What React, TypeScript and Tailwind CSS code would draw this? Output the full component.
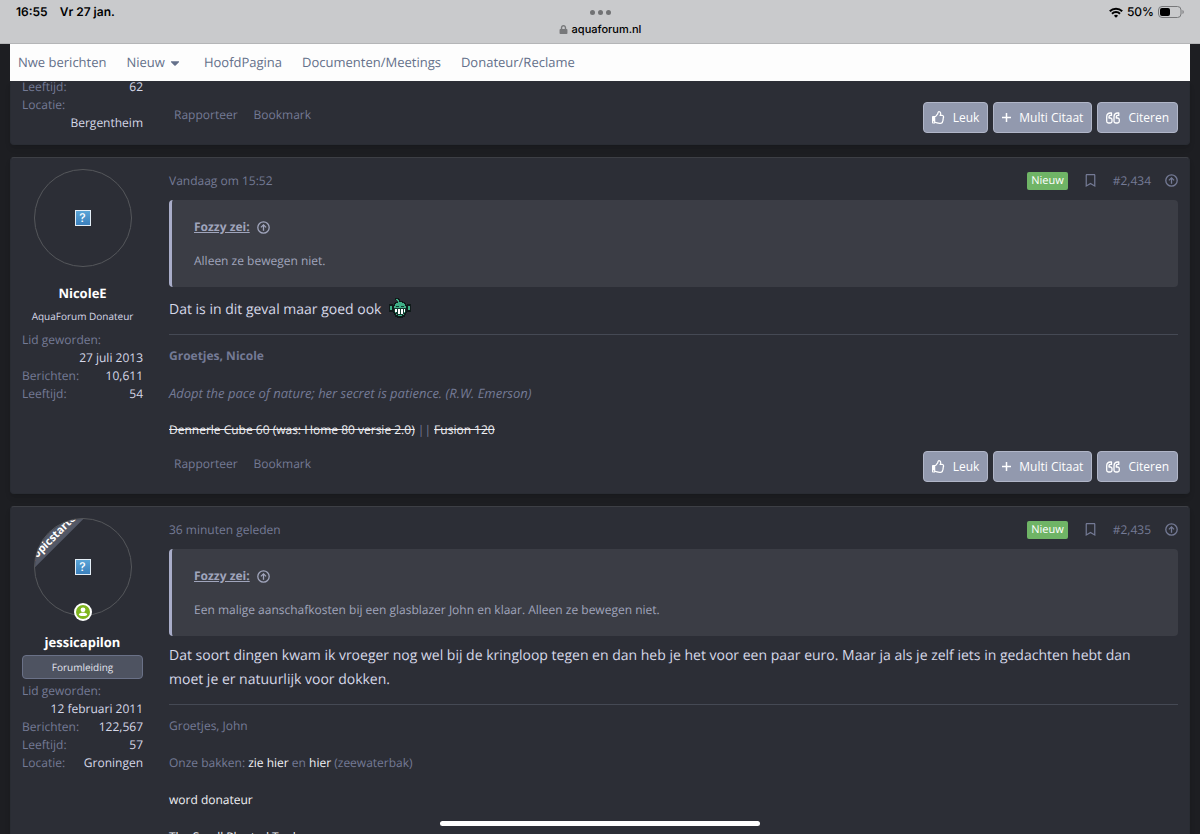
import { FaCaretDown, FaLock, FaRegBookmark, FaRegThumbsUp } from "react-icons/fa";
import type { ReactNode } from "react";

const navLinks = [
  { name: "Nwe berichten" },
  { name: "Nieuw", menu: true },
  { name: "HoofdPagina" },
  { name: "Documenten/Meetings" },
  { name: "Donateur/Reclame" },
];

type Stat = { label: string; value: string; wrap?: boolean };

const WifiIcon = () => (
  <svg width="14" height="11" viewBox="0 0 14 11" fill="none" stroke="#000" strokeWidth="2">
    <path d="M.8 4.200a8.800 8.800 0 0 1 12.400 0" />
    <path d="M3 6.700a5.700 5.700 0 0 1 8 0" />
    <path d="M7 10.800 4.900 8.700a3 3 0 0 1 4.200 0z" fill="#000" stroke="none" />
  </svg>
);

const StatusBar = () => (
  <header className="relative h-11 shrink-0 border-b border-[#b4b5b7] bg-[#c9cacc] font-[Inter,sans-serif] text-black">
    <div className="flex items-center justify-between px-4 pt-1 text-xs leading-4 font-semibold">
      <div className="flex gap-3">
        <span>16:55</span>
        <span>Vr 27 jan.</span>
      </div>
      <div className="flex items-center gap-1">
        <WifiIcon />
        <span className="font-medium">50%</span>
        <svg width="26" height="12" viewBox="0 0 26 12" aria-label="Batterij">
          <rect x="0.5" y="0.5" width="22.500" height="11" rx="3.500" fill="none" stroke="#77787a" />
          <rect x="2" y="2" width="10" height="8" rx="2" />
          <path d="M24.500 4v4c1.600-.6 1.600-3.400 0-4z" fill="#77787a" />
        </svg>
      </div>
    </div>
    <div className="absolute inset-x-0 top-[10px] flex flex-col items-center gap-2">
      <div className="flex gap-[3px]">
        <i className="size-[5px] rounded-full bg-[#717274]" />
        <i className="size-[5px] rounded-full bg-[#717274]" />
        <i className="size-[5px] rounded-full bg-[#717274]" />
      </div>
      <div className="flex items-center gap-1 text-[11px] leading-3 font-medium">
        <FaLock size={9} color="#77787a" />
        <span>aquaforum.nl</span>
      </div>
    </div>
  </header>
);

const Navbar = () => (
  <nav className="relative z-10 mx-[10px] flex h-[37px] shrink-0 items-center gap-5 bg-[#fdfdfd] px-2 text-[13px] text-[#64708a]">
    {navLinks.map((link) => (
      <a key={link.name} href="#" className="flex items-center gap-[3px]">
        {link.name}
        {link.menu && <FaCaretDown size={14} className="mr-[2px]" />}
      </a>
    ))}
  </nav>
);

const Stats = ({ items }: { items: Stat[] }) => (
  <dl className="text-xs leading-[18px]">
    {items.map((item) => (
      <div key={item.label} className={item.wrap ? "" : "flex justify-between"}>
        <dt className="text-[#747a95]">{item.label}</dt>
        <dd className="text-right text-[#d6d8e8]">{item.value}</dd>
      </div>
    ))}
  </dl>
);

const Avatar = ({ starter }: { starter?: boolean }) => (
  <div className="relative mx-auto size-[98px]">
    <div className="relative flex size-full items-center justify-center overflow-hidden rounded-full border border-[#55575b]">
      <span className="flex size-4 items-center justify-center border border-[#e4eef6] bg-linear-to-b from-[#5aa5d8] to-[#3a7fbb] font-[Inter,sans-serif] text-xs leading-none font-medium text-white">
        ?
      </span>
      {starter && (
        <span className="absolute top-[10px] -left-[36px] w-[110px] -rotate-45 bg-[#535866] text-center text-[11px] leading-4 font-bold text-white">
          Topicstarter
        </span>
      )}
    </div>
    {starter && (
      <svg className="absolute -bottom-[5px] left-[40px]" width="18" height="18" viewBox="0 0 18 18" aria-label="Online">
        <circle cx="9" cy="9" r="9" fill="#fff" />
        <circle cx="9" cy="9" r="7" fill="#7fb51e" />
        <circle cx="9" cy="6.800" r="2.400" fill="#fff" />
        <path d="M4.800 11.500c0-2.200 8.400-2.200 8.400 0 0 .8-1 1.500-4.200 1.500s-4.200-.7-4.200-1.500z" fill="#fff" />
      </svg>
    )}
  </div>
);

const QuoteIcon = () => (
  <svg width="14" height="12" viewBox="0 0 14 12" fill="none" stroke="currentColor" strokeWidth="1.300" strokeLinejoin="round">
    <path d="M5.500 1H4.600C2.300 1 .7 2.700.7 5v4.200c0 1 .7 1.800 1.800 1.800h1.700c1 0 1.800-.8 1.800-1.800V7.700C6 6.700 5.200 6 4.200 6H3V5c0-1 .6-1.600 1.600-1.600h.9z" />
    <path d="M12.800 1h-.9C9.600 1 8 2.700 8 5v4.200c0 1 .7 1.800 1.800 1.800h1.700c1 0 1.800-.8 1.800-1.800V7.700c0-1-.8-1.700-1.800-1.700h-1.200V5c0-1 .6-1.600 1.600-1.600h.9z" />
  </svg>
);

const PlusIcon = () => (
  <svg width="9" height="9" viewBox="0 0 9 9" stroke="currentColor" strokeWidth="1.500">
    <path d="M0 4.500h9M4.500 0v9" />
  </svg>
);

const ArrowUpIcon = () => (
  <svg width="13" height="13" viewBox="0 0 13 13" fill="none" stroke="currentColor" strokeWidth="1.300">
    <circle cx="6.500" cy="6.500" r="5.700" />
    <path d="M6.500 9.800V4" />
    <path d="M3.900 6.400 6.500 3.800l2.600 2.600" />
  </svg>
);

const actionStyling =
  "flex h-[31px] items-center gap-2 rounded border border-[#b1b6c8] bg-[#9299ae] px-2 text-xs text-white";

const PostActions = () => (
  <div className="flex items-end justify-between">
    <div className="flex gap-4 pb-[9px] pl-[5px] text-xs leading-[18px] text-[#747a95]">
      <a href="#">Rapporteer</a>
      <a href="#">Bookmark</a>
    </div>
    <div className="flex gap-[5px]">
      <button className={actionStyling}>
        <FaRegThumbsUp size={13} />
        Leuk
      </button>
      <button className={actionStyling}>
        <PlusIcon />
        Multi Citaat
      </button>
      <button className={actionStyling}>
        <QuoteIcon />
        Citeren
      </button>
    </div>
  </div>
);

const Smiley = () => (
  <svg width="22" height="20" viewBox="0 0 22 20" aria-label="Grijns">
    <path d="M6 0h4v1h1v2h3v1h2v1h1v2h1V6h4v8h-4v1h-1v2h-1v2h-2v1H8v-1H6v-2H5v-2H4v-1H0V6h4v1h1V5h1V4h3V2H6z" fill="#101a1a" />
    <path d="M7 1h2v1h1v2h3v1h2v1h1v2h1v5h-1v2h-1v2h-2v1H9v-1H7v-2H6v-2H5V8h1V6h1V5h2V3H8V2H7zM1 8h2v4H1zM19 8h2v4h-2z" fill="#3fae86" />
    <path d="M7 8h3v1H7zM12 8h3v1h-3zM5 10h12v4h-2v2h-1v1H8v-1H7v-2H5z" fill="#143a30" />
    <path d="M6 11h2v3H6zM9 11h2v5H9zM12 11h2v5h-2zM15 11h1v3h-1z" fill="#fff" />
  </svg>
);

type PostProps = {
  name: string;
  date: string;
  number: string;
  quote: string;
  starter?: boolean;
  title: ReactNode;
  stats: Stat[];
  children: ReactNode;
};

const Post = ({ name, date, number, quote, starter, title, stats, children }: PostProps) => (
  <article className="mx-[10px] flex shrink-0 rounded border border-[#292c33] border-t-[#3d3f45] bg-[#2c2e36] px-[11px] pt-[11px] pb-[11px] shadow-md">
    <aside className="mr-[26px] w-[121px] shrink-0">
      <Avatar starter={starter} />
      <h4 className="mt-[17px] text-center text-[13px] leading-[18px] font-bold text-white">
        {name}
      </h4>
      {title}
      <Stats items={stats} />
    </aside>
    <div className="min-w-0 flex-1">
      <div className="flex h-[23px] items-center text-xs text-[#747a95]">
        <time className="flex-1">{date}</time>
        <span className="rounded-xs bg-[#6fb466] px-1 text-[11px] leading-[18px] text-white">Nieuw</span>
        <a href="#" aria-label="Bookmark" className="ml-4">
          <FaRegBookmark size={13} />
        </a>
        <a href="#" className="ml-4">
          {number}
        </a>
        <a href="#" aria-label="Naar boven" className="ml-[14px]">
          <ArrowUpIcon />
        </a>
      </div>
      <blockquote className="mt-2 h-[87px] rounded border-l-[3px] border-[#a9adc9] bg-[#3b3d45] px-[22px] pt-[18px] text-xs leading-[18px] text-[#a0a5bc]">
        <a href="#" className="flex items-center gap-[7px] font-bold">
          <span className="underline">Fozzy zei:</span>
          <ArrowUpIcon />
        </a>
        <p className="mt-4">{quote}</p>
      </blockquote>
      {children}
    </div>
  </article>
);

const signatureStyling =
  "mt-3 space-y-[19px] border-t border-[#454954] pt-3 text-xs leading-[18px] text-[#747a95]";

const App = () => {
  return (
    <div className="relative flex h-screen flex-col overflow-hidden bg-[#1d1e22] font-['Open_Sans',sans-serif] [text-rendering:geometricPrecision]">
      <StatusBar />
      <Navbar />

      <main className="flex flex-col gap-3">
        <article className="mx-[10px] flex shrink-0 rounded-b border border-t-0 border-[#292c33] bg-[#2c2e36] px-[11px] pb-[11px] shadow-md">
          <aside className="-mt-[3px] mr-[26px] w-[121px] shrink-0">
            <Stats
              items={[
                { label: "Leeftijd:", value: "62" },
                { label: "Locatie:", value: "Bergentheim", wrap: true },
              ]}
            />
          </aside>
          <div className="flex-1 pt-[21px]">
            <PostActions />
          </div>
        </article>

        <Post
          name="NicoleE"
          date="Vandaag om 15:52"
          number="#2,434"
          quote="Alleen ze bewegen niet."
          title={
            <p className="mt-[5px] mb-[5px] text-center text-[10px] leading-[19px] text-[#d6d8e8]">
              AquaForum Donateur
            </p>
          }
          stats={[
            { label: "Lid geworden:", value: "27 juli 2013", wrap: true },
            { label: "Berichten:", value: "10,611" },
            { label: "Leeftijd:", value: "54" },
          ]}
        >
          <div className="mt-[11px] flex items-start gap-2 text-sm leading-6 text-[#d6d8e8]">
            <p>Dat is in dit geval maar goed ook</p>
            <Smiley />
          </div>
          <div className={signatureStyling}>
            <p className="font-bold">Groetjes, Nicole</p>
            <p className="text-[13px] italic">
              Adopt the pace of nature; her secret is patience. (R.W. Emerson)
            </p>
            <p>
              <a href="#" className="text-[#f0f0f4] line-through">
                Dennerle Cube 60 (was: Home 80 versie 2.0)
              </a>{" "}
              ||{" "}
              <a href="#" className="text-[#f0f0f4] line-through">
                Fusion 120
              </a>
            </p>
          </div>
          <div className="mt-3">
            <PostActions />
          </div>
        </Post>

        <Post
          name="jessicapilon"
          date="36 minuten geleden"
          number="#2,435"
          quote="Een malige aanschafkosten bij een glasblazer John en klaar. Alleen ze bewegen niet."
          starter
          title={
            <p className="mt-1 mb-[3px] rounded border border-[#6a7187] bg-[#4e5361] text-center text-[10px] leading-[22px] text-[#e2e4ee]">
              Forumleiding
            </p>
          }
          stats={[
            { label: "Lid geworden:", value: "12 februari 2011", wrap: true },
            { label: "Berichten:", value: "122,567" },
            { label: "Leeftijd:", value: "57" },
            { label: "Locatie:", value: "Groningen" },
          ]}
        >
          <p className="mt-2 pr-6 text-sm leading-6 text-[#d6d8e8]">
            Dat soort dingen kwam ik vroeger nog wel bij de kringloop tegen en dan heb je het voor een
            paar euro. Maar ja als je zelf iets in gedachten hebt dan moet je er natuurlijk voor dokken.
          </p>
          <div className={signatureStyling}>
            <p>Groetjes, John</p>
            <p>
              Onze bakken: <a href="#" className="text-[#f0f0f4]">zie hier</a> en{" "}
              <a href="#" className="text-[#f0f0f4]">hier</a> (zeewaterbak)
            </p>
            <p>
              <a href="#" className="text-[#f0f0f4]">word donateur</a>
            </p>
            <p>
              <a href="#" className="text-[#f0f0f4]">The Small Planted Tank</a>
            </p>
          </div>
        </Post>
      </main>

      <div className="absolute bottom-2 left-1/2 h-[5px] w-80 -translate-x-1/2 rounded-full bg-white" />
    </div>
  );
};

export default App;
